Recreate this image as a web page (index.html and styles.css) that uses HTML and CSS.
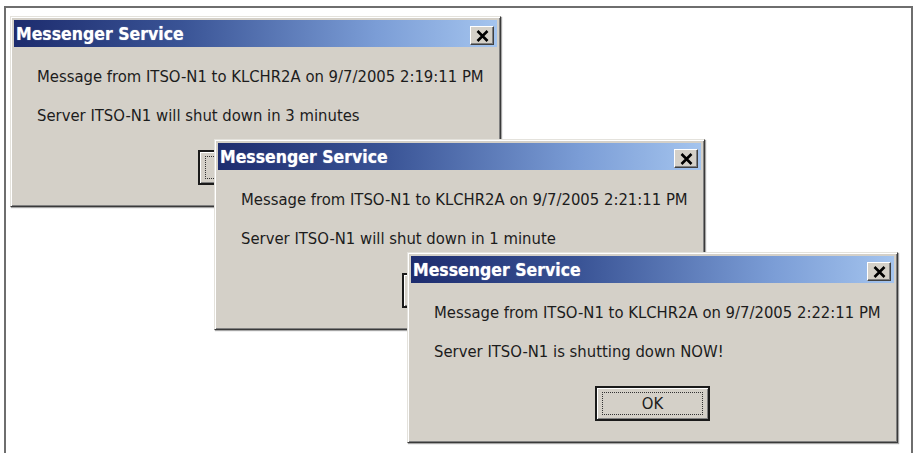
FILE: index.html
```html
<!DOCTYPE html>
<html>
<head>
<meta charset="utf-8">
<link rel="stylesheet" href="styles.css">
</head>
<body>
<div class="desk">
  <div class="win w1">
    <div class="title">
      <span class="caption">Messenger Service</span>
      <span class="close"><svg width="13" height="12" viewBox="0 0 13 12"><path d="M1.5 1 L11.5 11 M11.5 1 L1.5 11" stroke="#000" stroke-width="2.6"/></svg></span>
    </div>
    <div class="body">
      <p class="line">Message from ITSO-N1 to KLCHR2A on 9/7/2005 2:19:11 PM</p>
      <p class="line second">Server ITSO-N1 will shut down in 3 minutes</p>
      <div class="actions"><span class="ok"><span class="focus"></span></span></div>
    </div>
  </div>
  <div class="win w2">
    <div class="title">
      <span class="caption">Messenger Service</span>
      <span class="close"><svg width="13" height="12" viewBox="0 0 13 12"><path d="M1.5 1 L11.5 11 M11.5 1 L1.5 11" stroke="#000" stroke-width="2.6"/></svg></span>
    </div>
    <div class="body">
      <p class="line">Message from ITSO-N1 to KLCHR2A on 9/7/2005 2:21:11 PM</p>
      <p class="line second">Server ITSO-N1 will shut down in 1 minute</p>
      <div class="actions"><span class="ok"><span class="focus"></span></span></div>
    </div>
  </div>
  <div class="win w3">
    <div class="title">
      <span class="caption">Messenger Service</span>
      <span class="close"><svg width="13" height="12" viewBox="0 0 13 12"><path d="M1.5 1 L11.5 11 M11.5 1 L1.5 11" stroke="#000" stroke-width="2.6"/></svg></span>
    </div>
    <div class="body">
      <p class="line">Message from ITSO-N1 to KLCHR2A on 9/7/2005 2:22:11 PM</p>
      <p class="line second">Server ITSO-N1 is shutting down NOW!</p>
      <div class="actions"><span class="ok"><span class="focus">OK</span></span></div>
    </div>
  </div>
</div>
</body>
</html>
```

FILE: styles.css
```css
html, body {
  margin: 0;
  padding: 0;
  background: #ffffff;
  overflow: hidden;
}

.desk {
  position: relative;
  margin: 6px 5px 0 4px;
  height: 445px;
  border: 2px solid #6e6e6e;
  border-bottom: none;
  background: #ffffff;
  font-family: "DejaVu Sans Condensed", "DejaVu Sans", sans-serif;
  font-stretch: condensed;
}

.win {
  position: absolute;
  width: 491px;
  height: 191px;
  box-sizing: border-box;
  background: #d4d0c8;
  border: 1px solid;
  border-color: #e4e2dc #3a3a3a #3a3a3a #e4e2dc;
  box-shadow: inset 1px 1px #ffffff, inset -1px -1px #808080, 1px 1px 1px rgba(0,0,0,0.35);
  padding: 3px;
  display: flex;
  flex-direction: column;
}

.w1 { left: 4px; top: 8px; }
.w2 { left: 208px; top: 131px; }
.w3 { left: 401px; top: 244px; }

.title {
  height: 27px;
  flex: none;
  display: flex;
  align-items: center;
  justify-content: space-between;
  padding: 0 3px 0 2px;
  background: linear-gradient(to right, #1d2c6e 0%, #3a5496 35%, #7b9dd6 75%, #a4c4ee 100%);
}

.caption {
  color: #ffffff;
  font-weight: bold;
  font-size: 17.5px;
  padding-top: 1px;
  text-shadow: 0 0 1px rgba(255,255,255,0.6);
}

.close {
  width: 24px;
  height: 19px;
  margin-top: 4px;
  box-sizing: border-box;
  background: #d4d0c8;
  border: 1px solid;
  border-color: #ffffff #404040 #404040 #ffffff;
  box-shadow: inset -1px -1px #808080;
  display: flex;
  align-items: center;
  justify-content: center;
}

.body {
  flex: 1;
  padding: 20px 0 0 23px;
  color: #1c1c1c;
  font-size: 16.5px;
}

.line {
  margin: 0;
  height: 20px;
  line-height: 20px;
  white-space: nowrap;
}

.second {
  margin-top: 19px;
}

.actions {
  margin-top: 24px;
  display: flex;
  justify-content: center;
  padding-right: 23px;
}

.ok {
  width: 115px;
  height: 35px;
  box-sizing: border-box;
  border: 2px solid #1a1a1a;
  background: #d4d0c8;
  box-shadow: inset 1px 1px #ffffff, inset -1px -1px #808080;
  padding: 4px 5px;
  display: flex;
}

.focus {
  flex: 1;
  border: 1px dotted #333;
  display: flex;
  align-items: center;
  justify-content: center;
  font-size: 16.5px;
  color: #1c1c1c;
}
```
